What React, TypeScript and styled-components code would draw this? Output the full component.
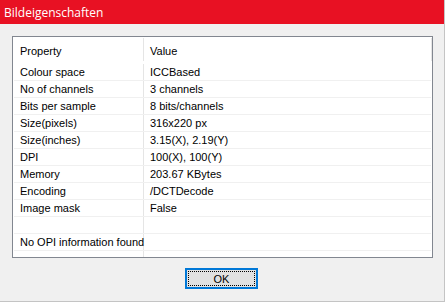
import React from "react";
import styled, { createGlobalStyle } from "styled-components";

const Global = createGlobalStyle`
  html, body { margin: 0; padding: 0; background: #f0f0f0; }
  * { box-sizing: border-box; }
`;

const Window = styled.div`
  width: 445px;
  height: 302px;
  background: #f0f0f0;
  display: flex;
  flex-direction: column;
  border-right: 1px solid #c4c4c4;
  border-bottom: 1px solid #c4c4c4;
  font-family: "Liberation Sans", Arial, sans-serif;
  font-size: 11px;
  color: #000;
`;

const TitleBar = styled.div`
  height: 24px;
  flex: none;
  background: #e81123;
  color: #fff;
  font-family: "Open Sans", "Noto Sans", sans-serif;
  font-size: 12px;
  display: flex;
  align-items: center;
  padding-left: 4px;
`;

const Body = styled.div`
  flex: 1;
  display: flex;
  flex-direction: column;
  padding: 12px 11px 0 12px;
`;

const ListBox = styled.div`
  height: 222px;
  border: 1px solid #828790;
  background: #fff;
  padding: 1px 1px 0 1px;
  overflow: hidden;
`;

const Row = styled.div<{ $header?: boolean }>`
  display: grid;
  grid-template-columns: 130px 288px;
  height: ${(p) => (p.$header ? "26px" : "17px")};
  border-bottom: ${(p) => (p.$header ? "none" : "1px solid #f0f0f0")};
`;

const Cell = styled.div<{ $divider?: boolean }>`
  display: flex;
  align-items: center;
  padding-left: 6px;
  white-space: nowrap;
  overflow: visible;
  border-right: ${(p) => (p.$divider ? "1px solid #e5e5e5" : "none")};
`;

const HeaderCell = styled(Cell)`
  border-right: 1px solid #e5e5e5;
  height: 23px;
  padding-top: 3px;
  align-self: start;
`;

const ButtonRow = styled.div`
  display: flex;
  justify-content: center;
  padding-top: 10px;
`;

const Button = styled.button`
  width: 73px;
  height: 21px;
  margin-right: 2px;
  border: 2px solid #0078d7;
  background: #e1e1e1;
  padding: 0;
  font-family: "Liberation Sans", Arial, sans-serif;
  font-size: 11px;
  color: #000;
  position: relative;
  &::after {
    content: "";
    position: absolute;
    inset: 1px;
    border: 1px dotted #000;
  }
`;

const rows: [string, string][] = [
  ["Colour space", "ICCBased"],
  ["No of channels", "3 channels"],
  ["Bits per sample", "8 bits/channels"],
  ["Size(pixels)", "316x220 px"],
  ["Size(inches)", "3.15(X), 2.19(Y)"],
  ["DPI", "100(X), 100(Y)"],
  ["Memory", "203.67 KBytes"],
  ["Encoding", "/DCTDecode"],
  ["Image mask", "False"],
  ["", ""],
  ["No OPI information found", ""],
  ["", ""],
];

export default function App() {
  return (
    <>
      <Global />
      <Window>
        <TitleBar>Bildeigenschaften</TitleBar>
        <Body>
          <ListBox>
            <Row $header>
              <HeaderCell>Property</HeaderCell>
              <HeaderCell>Value</HeaderCell>
            </Row>
            {rows.map(([k, v], i) => (
              <Row key={i}>
                <Cell $divider>{k}</Cell>
                <Cell>{v}</Cell>
              </Row>
            ))}
          </ListBox>
          <ButtonRow>
            <Button>OK</Button>
          </ButtonRow>
        </Body>
      </Window>
    </>
  );
}
